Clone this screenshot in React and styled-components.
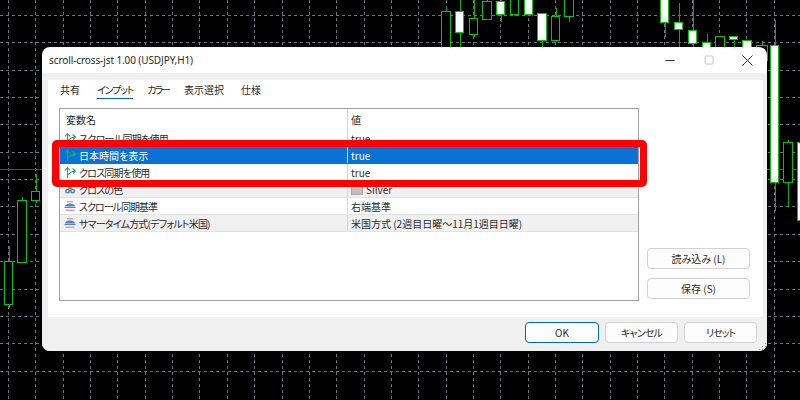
import styled, { createGlobalStyle } from 'styled-components';

const GlobalStyle = createGlobalStyle`
  html, body {
    margin: 0;
    padding: 0;
    background: #000;
  }
  body {
    font-family: "Noto Sans CJK JP", "Noto Sans", sans-serif;
    font-feature-settings: "palt";
  }
`;

// x, width, top, bottom, wick top, wick bottom, filled
const candles = [
  [4.5, 8, 261.5, 304.5, 246, 308, false],
  [17.5, 9, 200.5, 262.5, 197, 262, false],
  [31.5, 8, 191.5, 200.5, 174, 203, false],
  [441.5, 9, 11.5, 60.5, 8, 60, false],
  [455.5, 8, 11.5, 32.5, 0, 48, true],
  [469.5, 8, 18.5, 34.5, 0, 37, false],
  [482.5, 9, 1.5, 19.5, 0, 19, false],
  [496.5, 8, 1.5, 14.5, 0, 22, true],
  [510.5, 8, -1.5, 14.5, 0, 16, false],
  [524.5, 8, -1.5, 14.5, 0, 16, true],
  [537.5, 9, 13.5, 40.5, 13, 48, true],
  [551.5, 8, 16.5, 40.5, 8, 42, false],
  [564.5, 9, -1.5, 16.5, -1, 22, false],
  [660.5, 8, -1.5, 22.5, -1, 37, true],
  [674.5, 8, 22.5, 29.5, 3, 48, true],
  [688.5, 8, 30.5, 43.5, 0, 48, true],
  [702.5, 8, 42.5, 48.5, 34, 48, true],
  [715.5, 9, 36.5, 48.5, 36, 48, false],
  [729.5, 8, 36.5, 39.5, 36, 48, true],
  [742.5, 9, 40.5, 48.5, 40, 48, true],
  [756.5, 11, 45.5, 60.5, 41, 60, false],
  [770.5, 8, 45.5, 182.5, 20, 211, true],
  [783.5, 9, 142.5, 182.5, 140, 207, false],
  [797.5, 9, 142.5, 220.5, 142, 220, true],
];

const gridX = Array.from({ length: 29 }, (_, i) => Math.round(8 + i * 27.35) + 0.5);
const gridY = Array.from({ length: 14 }, (_, i) => Math.round(15 + i * 27.35) + 0.5);

const BarIcon = ({ selected }) => (
  <svg width="14" height="14" viewBox="0 0 14 14" fill="none" stroke={selected ? '#12b84a' : '#2aa850'} strokeWidth="1.1">
    <path d="M4.500 13V3M2 5.500L4.500 2.500 7 5.500" />
    <path d="M4.500 10.500C6 8 8 6.500 12 6M9.500 3.500L12.500 6 10 8.500" />
  </svg>
);

const EnumIcon = () => (
  <svg width="14" height="14" viewBox="0 0 14 14">
    <rect x="4" y="2" width="6" height="1.500" fill="#e99a9a" />
    <path d="M2 7.500C2 5.500 4.500 4.500 7 4.500s5 1 5 3z" fill="#4a86c8" />
    <rect x="1.500" y="8" width="11" height="1" fill="#4a86c8" />
    <rect x="2.500" y="10.500" width="9" height="1.500" fill="#e99a9a" />
  </svg>
);

const ColorIcon = () => (
  <svg width="14" height="14" viewBox="0 0 14 14">
    <circle cx="7" cy="5" r="2.400" fill="#4fae5c" />
    <circle cx="4.500" cy="9" r="2.500" fill="#4a86c8" />
    <circle cx="9.500" cy="9" r="2.500" fill="#4a86c8" />
    <circle cx="4.500" cy="9" r="1" fill="#fff" />
    <circle cx="9.500" cy="9" r="1" fill="#fff" />
  </svg>
);

const rows = [
  { icon: <BarIcon />, name: 'スクロール同期を使用', value: 'true', squeeze: -0.7 },
  { icon: <BarIcon selected />, name: '日本時間を表示', value: 'true', selected: true },
  { icon: <BarIcon />, name: 'クロス同期を使用', value: 'true', squeeze: -0.8 },
  { icon: <ColorIcon />, name: 'クロスの色', value: 'Silver', swatch: true, shaded: true, squeeze: -0.8 },
  { icon: <EnumIcon />, name: 'スクロール同期基準', value: '右端基準', squeeze: -1 },
  { icon: <EnumIcon />, name: 'サマータイム方式(デフォルト米国)', value: '米国方式 (2週目日曜〜11月1週目日曜)', shaded: true, squeeze: -0.8 },
];

const tabs = [
  { label: '共有', squeeze: 0, gap: 17 },
  { label: 'インプット', squeeze: -1.2, gap: 14 },
  { label: 'カラー', squeeze: -2, gap: 15 },
  { label: '表示選択', squeeze: 0, gap: 17 },
  { label: '仕様', squeeze: 0, gap: 0 },
];

const Chart = () => (
  <ChartSvg width="800" height="400" viewBox="0 0 800 400">
    {gridX.map((x) => (
      <line key={x} x1={x} x2={x} y1="0" y2="400" stroke="#66747f" strokeDasharray="3 3" />
    ))}
    {gridY.map((y) => (
      <line key={y} x1="0" x2="800" y1={y} y2={y} stroke="#66747f" strokeDasharray="3 3" />
    ))}
    <line x1="0" x2="800" y1="169.500" y2="169.500" stroke="#4d4d4d" />
    {candles.map(([x, w, top, bottom, wickTop, wickBottom, filled]) => (
      <g key={x}>
        <line x1={Math.round(x + w / 2) + 0.5} x2={Math.round(x + w / 2) + 0.5} y1={wickTop} y2={wickBottom} stroke="#00b400" />
        <rect x={x} y={top} width={w} height={bottom - top} fill={filled ? '#fff' : '#000'} stroke="#00c800" />
      </g>
    ))}
  </ChartSvg>
);

const App = () => {
  return (
    <Screen>
      <GlobalStyle />
      <Chart />
      <Dialog>
        <TitleBar>
          <Title>scroll-cross-jst 1.00 (USDJPY,H1)</Title>
          <WindowButtons>
            <WindowButton>
              <svg width="10" height="10" viewBox="0 0 10 10">
                <line x1="0.500" x2="9.500" y1="5.500" y2="5.500" stroke="#333" />
              </svg>
            </WindowButton>
            <WindowButton>
              <svg width="10" height="10" viewBox="0 0 10 10">
                <rect x="1" y="1" width="8" height="8" rx="1" fill="none" stroke="#c8c8c8" />
              </svg>
            </WindowButton>
            <WindowButton>
              <svg width="11" height="11" viewBox="0 0 11 11">
                <path d="M.5.500l10 10M10.500.500l-10 10" stroke="#333" fill="none" />
              </svg>
            </WindowButton>
          </WindowButtons>
        </TitleBar>
        <Body>
          <Panel>
            <Tabs>
              {tabs.map((tab, key) => (
                <Tab key={tab.label} $active={key === 1} $squeeze={tab.squeeze} $gap={tab.gap}>
                  {tab.label}
                </Tab>
              ))}
            </Tabs>
            <Content>
              <Table>
                <HeaderRow>
                  <NameCell>変数名</NameCell>
                  <ValueCell>値</ValueCell>
                </HeaderRow>
                {rows.map((row) => (
                  <Row key={row.name} $selected={row.selected} $shaded={row.shaded}>
                    <NameCell>
                      <IconBox>{row.icon}</IconBox>
                      <RowName $squeeze={row.squeeze}>{row.name}</RowName>
                    </NameCell>
                    <ValueCell>
                      {row.swatch && <Swatch />}
                      {row.value}
                    </ValueCell>
                  </Row>
                ))}
                <RedBox />
              </Table>
              <SideButtons>
                <Button>読み込み (L)</Button>
                <Button>保存 (S)</Button>
              </SideButtons>
            </Content>
          </Panel>
          <Footer>
            <Button $primary>OK</Button>
            <Button $squeeze={-0.8}>キャンセル</Button>
            <Button $squeeze={-1}>リセット</Button>
            <Grip />
          </Footer>
        </Body>
      </Dialog>
    </Screen>
  );
};

export default App;

const Screen = styled.div`
  position: relative;
  width: 800px;
  height: 400px;
  box-sizing: border-box;
  padding: 47px 0 0 42px;
  background: #000;
  overflow: hidden;
`;

const ChartSvg = styled.svg`
  position: absolute;
  left: 0;
  top: 0;
`;

const Dialog = styled.div`
  position: relative;
  width: 725px;
  height: 304px;
  display: flex;
  flex-direction: column;
  background: #fff;
  border-radius: 8px;
  overflow: hidden;
  color: #2a2a2a;
`;

const TitleBar = styled.div`
  height: 26px;
  flex: none;
  display: flex;
  align-items: center;
  justify-content: space-between;
  padding-left: 7px;
`;

const Title = styled.div`
  font-family: "Noto Sans", sans-serif;
  font-size: 10px;
  letter-spacing: -0.1px;
  color: #2a2a2a;
`;

const WindowButtons = styled.div`
  display: flex;
`;

const WindowButton = styled.div`
  width: 39px;
  height: 26px;
  display: flex;
  align-items: center;
  justify-content: center;
`;

const Body = styled.div`
  flex: 1;
  display: flex;
  flex-direction: column;
  background: #f0f0f0;
  padding: 7px 4px 0 6px;
  min-height: 0;
`;

const Panel = styled.div`
  height: 237px;
  flex: none;
  background: #fff;
  box-sizing: border-box;
  padding-left: 11px;
`;

const Tabs = styled.div`
  height: 28px;
  display: flex;
  padding-left: 1px;
`;

const Tab = styled.div`
  height: 18px;
  margin-right: ${({ $gap }) => $gap}px;
  display: flex;
  align-items: center;
  font-size: 10px;
  letter-spacing: ${({ $squeeze }) => $squeeze}px;
  color: #2a2a2a;
  border-bottom: 1px solid ${({ $active }) => ($active ? '#0067c0' : 'transparent')};
`;

const Content = styled.div`
  display: flex;
  gap: 8px;
`;

const Table = styled.div`
  position: relative;
  width: 580px;
  height: 193px;
  box-sizing: border-box;
  border: 1px solid #a0a0a0;
  flex: none;
`;

const HeaderRow = styled.div`
  height: 21px;
  display: grid;
  grid-template-columns: 288px 1fr;
  align-items: center;
  font-size: 10px;
`;

const Row = styled.div`
  height: 17px;
  box-sizing: border-box;
  display: grid;
  grid-template-columns: 288px 1fr;
  align-items: center;
  font-size: 10px;
  background: ${({ $selected, $shaded }) => ($selected ? '#0a72d4' : $shaded ? '#f0f0f0' : '#fff')};
  color: ${({ $selected }) => ($selected ? '#fff' : '#2a2a2a')};
  border-bottom: 1px solid ${({ $selected }) => ($selected ? '#0a72d4' : '#e2e2e2')};
`;

const NameCell = styled.div`
  height: 100%;
  display: flex;
  align-items: center;
  padding-left: 6px;
  box-sizing: border-box;
  border-right: 1px solid #d4d4d4;
  white-space: nowrap;
`;

const RowName = styled.span`
  letter-spacing: ${({ $squeeze }) => $squeeze || 0}px;
`;

const ValueCell = styled.div`
  height: 100%;
  display: flex;
  align-items: center;
  padding-left: 3px;
  white-space: nowrap;
`;

const IconBox = styled.span`
  width: 14px;
  height: 14px;
  flex: none;
  margin: 0 2px 0 -3px;
  display: flex;
`;

const Swatch = styled.span`
  width: 10px;
  height: 10px;
  margin-right: 3px;
  background: #c0c0c0;
  border: 1px solid #a8a8a8;
`;

const RedBox = styled.div`
  position: absolute;
  left: -8px;
  top: 31px;
  width: 595px;
  height: 47px;
  box-sizing: border-box;
  border: 7px solid #fe0000;
  border-radius: 5px;
`;

const SideButtons = styled.div`
  display: flex;
  flex-direction: column;
  gap: 9px;
  width: 103px;
  padding-top: 140px;
`;

const Button = styled.div`
  height: 21px;
  width: ${({ $primary }) => ($primary ? '74px' : '100%')};
  box-sizing: border-box;
  display: flex;
  align-items: center;
  justify-content: center;
  font-size: 10px;
  letter-spacing: ${({ $squeeze }) => $squeeze || 0}px;
  color: #2a2a2a;
  background: #fdfdfd;
  border: 1px solid ${({ $primary }) => ($primary ? '#0067c0' : '#d2d2d2')};
  border-radius: 4px;
`;

const Footer = styled.div`
  position: relative;
  flex: 1;
  display: flex;
  justify-content: flex-end;
  gap: 6px;
  padding: 5px 6px 0 0;

  & > ${Button}:not(:first-child) {
    width: 73px;
  }
`;

const Grip = styled.div`
  position: absolute;
  right: -3px;
  bottom: 1px;
  width: 8px;
  height: 8px;
  background-image: radial-gradient(circle, #9a9a9a 0.8px, transparent 1px);
  background-size: 3px 3px;
  clip-path: polygon(100% 0, 100% 100%, 0 100%);
`;
